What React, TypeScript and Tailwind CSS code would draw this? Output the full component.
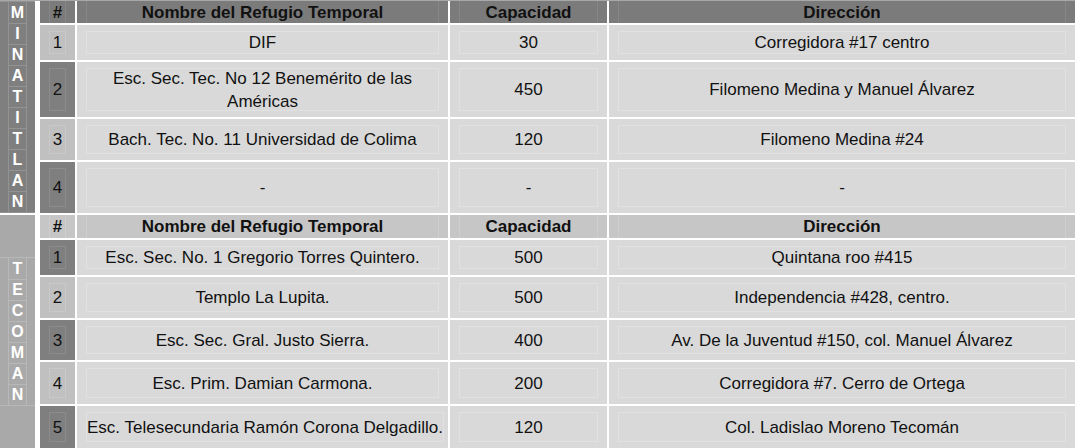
import React from 'react';

type Row = { n: string; name: React.ReactNode; cap: string; dir: string; dark: boolean };

const FONT = 'font-["Liberation_Sans",Arial,Helvetica,sans-serif]';

const minatitlan: Row[] = [
  { n: '1', name: 'DIF', cap: '30', dir: 'Corregidora #17 centro', dark: false },
  {
    n: '2',
    name: (
      <>
        Esc. Sec. Tec. No 12 Benemérito de las
        <br />
        Américas
      </>
    ),
    cap: '450',
    dir: 'Filomeno Medina y Manuel Álvarez',
    dark: true,
  },
  { n: '3', name: 'Bach. Tec. No. 11 Universidad de Colima', cap: '120', dir: 'Filomeno Medina #24', dark: false },
  { n: '4', name: '-', cap: '-', dir: '-', dark: true },
];

const tecoman: Row[] = [
  { n: '1', name: 'Esc. Sec. No. 1 Gregorio Torres Quintero.', cap: '500', dir: 'Quintana roo #415', dark: true },
  { n: '2', name: 'Templo La Lupita.', cap: '500', dir: 'Independencia #428, centro.', dark: false },
  { n: '3', name: 'Esc. Sec. Gral. Justo Sierra.', cap: '400', dir: 'Av. De la Juventud #150, col. Manuel Álvarez', dark: true },
  { n: '4', name: 'Esc. Prim. Damian Carmona.', cap: '200', dir: 'Corregidora #7. Cerro de Ortega', dark: false },
  { n: '5', name: 'Esc. Telesecundaria Ramón Corona Delgadillo.', cap: '120', dir: 'Col. Ladislao Moreno Tecomán', dark: true },
];

function Cell({ bg, line, header, children, bold }: {
  bg: string;
  line: string;
  header?: boolean;
  bold?: boolean;
  children: React.ReactNode;
}) {
  return (
    <div className={`${bg} flex px-[9px] ${header ? '' : 'py-[6px]'}`}>
      <div
        className={`flex flex-1 items-center justify-center border-x ${header ? '' : 'border-y'} ${line} text-center whitespace-nowrap leading-[23px] ${bold ? 'font-bold' : ''}`}
      >
        <span>{children}</span>
      </div>
    </div>
  );
}

function Section({ label, rows, headerDark, labelBg, labelLine, gridRows }: {
  label: string;
  rows: Row[];
  headerDark: boolean;
  labelBg: string;
  labelLine: string;
  gridRows: string;
}) {
  const headBg = headerDark ? 'bg-[#7b7b7b]' : 'bg-[#c6c6c6]';
  const headLine = headerDark ? 'border-[#878787]' : 'border-[#cecece]';
  return (
    <div className="flex h-full">
      {/* vertical town name */}
      <div className={`w-[35px] ${labelBg} flex flex-col justify-center`}>
        <div className={`border-y ${labelLine}`}>
          <div className={`ml-[8px] w-[19px] border-x ${labelLine} flex flex-col`}>
            {label.split('').map((ch, i) => (
              <div
                key={i}
                className={`h-[21px] flex items-center justify-center text-white font-bold text-[16px] ${i > 0 ? `border-t ${labelLine}` : ''}`}
              >
                {ch}
              </div>
            ))}
          </div>
        </div>
      </div>
      <div className="w-[5px] bg-white" />
      <div className={`flex-1 grid grid-cols-[35px_371px_157px_1fr] ${gridRows} gap-[2px] bg-white`}>
        <Cell bg={headBg} line={headLine} header bold>
          #
        </Cell>
        <Cell bg={headBg} line={headLine} header bold>
          Nombre del Refugio Temporal
        </Cell>
        <Cell bg={headBg} line={headLine} header bold>
          Capacidad
        </Cell>
        <Cell bg={headBg} line={headLine} header bold>
          Dirección
        </Cell>
        {rows.map((r) => (
          <React.Fragment key={r.n}>
            <Cell
              bg={r.dark ? 'bg-[#7f7f7f]' : 'bg-[#c0c0c0]'}
              line={r.dark ? 'border-[#8c8c8c]' : 'border-[#c9c9c9]'}
            >
              {r.n}
            </Cell>
            <Cell bg="bg-[#d9d9d9]" line="border-[#e1e1e1]">
              {r.name}
            </Cell>
            <Cell bg="bg-[#d9d9d9]" line="border-[#e1e1e1]">
              {r.cap}
            </Cell>
            <Cell bg="bg-[#d9d9d9]" line="border-[#e1e1e1]">
              {r.dir}
            </Cell>
          </React.Fragment>
        ))}
      </div>
    </div>
  );
}

export default function App() {
  return (
    <div className={`w-[1075px] h-[448px] bg-white overflow-hidden text-[17px] text-[#111111] ${FONT}`}>
      <div className="flex flex-col gap-[2px] h-full">
        <div className="h-[213px] border-t border-[#a8a8a8]">
          <Section
            label="MINATITLAN"
            rows={minatitlan}
            headerDark
            labelBg="bg-[#7f7f7f]"
            labelLine="border-[#939393]"
            gridRows="grid-rows-[22px_35px_55px_41px_51px]"
          />
        </div>
        <div className="h-[233px]">
          <Section
            label="TECOMAN"
            rows={tecoman}
            headerDark={false}
            labelBg="bg-[#a9a9a9]"
            labelLine="border-[#b8b8b8]"
            gridRows="grid-rows-[23px_35px_41px_40px_42px_42px]"
          />
        </div>
      </div>
    </div>
  );
}
